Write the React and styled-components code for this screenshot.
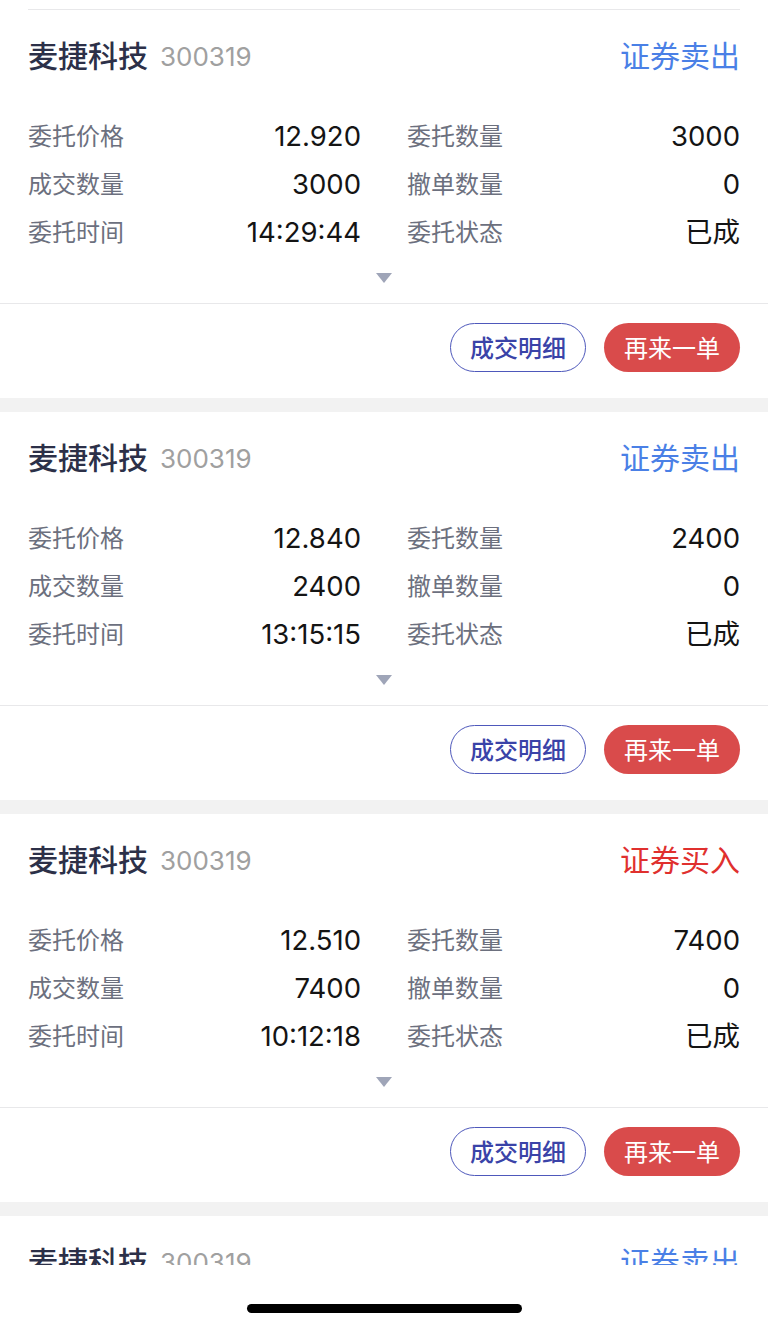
import React from "react";
import styled, { createGlobalStyle } from "styled-components";

const Global = createGlobalStyle`
  html, body { margin: 0; padding: 0; background: #ffffff; }
  body { font-family: "Liberation Sans", "Noto Sans CJK SC", sans-serif; -webkit-font-smoothing: antialiased; }
  * { box-sizing: border-box; }
`;

const Screen = styled.div`
  width: 768px;
  height: 1328px;
  display: flex;
  flex-direction: column;
  background: #ffffff;
  overflow: hidden;
`;

const ScrollArea = styled.div`
  height: 1265px;
  overflow: hidden;
  flex-shrink: 0;
`;

const TopRule = styled.div`
  margin: 9px 28px 0;
  height: 1px;
  background: #e8e8ea;
`;

const Card = styled.section`
  background: #ffffff;
`;

const Gap = styled.div`
  height: 14px;
  background: #f2f2f2;
`;

const Header = styled.div`
  height: 92px;
  padding: 0 28px 4px;
  display: flex;
  align-items: center;
  justify-content: space-between;
`;

const TitleGroup = styled.div`
  display: flex;
  align-items: center;
  gap: 12px;
`;

const Name = styled.span`
  font-family: "Noto Sans CJK SC", sans-serif;
  font-size: 30px;
  line-height: 1;
  font-weight: 500;
  color: #2c3048;
`;

const Code = styled.span`
  font-family: "Inter", sans-serif;
  font-size: 26px;
  line-height: 1;
  padding-top: 6px;
  color: #a0a0a0;
`;

const Side = styled.span`
  font-family: "Noto Sans CJK SC", sans-serif;
  font-size: 30px;
  line-height: 1;
  color: ${(p) => (p.$buy ? "#e0302e" : "#4a80e6")};
`;

const Grid = styled.div`
  padding: 9px 28px 0;
  display: grid;
  grid-template-columns: 333px 333px;
  column-gap: 46px;
`;

const Row = styled.div`
  height: 48px;
  display: flex;
  align-items: center;
  justify-content: space-between;
`;

const Label = styled.span`
  font-family: "Noto Sans CJK SC", sans-serif;
  font-size: 24px;
  line-height: 1;
  color: #6c707e;
`;

const Value = styled.span`
  font-family: "Inter", "Noto Sans CJK SC", sans-serif;
  font-size: 27.5px;
  line-height: 1;
  padding-top: 4px;
  color: #141414;
`;

const Expand = styled.div`
  height: 48px;
  padding-top: 18px;
  display: flex;
  justify-content: center;
`;

const Divider = styled.div`
  height: 1px;
  background: #e8e8ea;
`;

const Footer = styled.div`
  padding: 19px 28px 26px;
  display: flex;
  justify-content: flex-end;
  gap: 18px;
`;

const Button = styled.button`
  width: 136px;
  height: 49px;
  border-radius: 25px;
  font-family: "Noto Sans CJK SC", sans-serif;
  font-size: 24px;
  line-height: 1;
  padding: 0 0 2px;
  display: flex;
  align-items: center;
  justify-content: center;
  border: ${(p) => (p.$primary ? "none" : "1.5px solid #4e58bb")};
  background: ${(p) => (p.$primary ? "#d94b4b" : "#ffffff")};
  color: ${(p) => (p.$primary ? "#ffffff" : "#3a43a8")};
  font-weight: ${(p) => (p.$primary ? 400 : 500)};
`;

const BottomBar = styled.div`
  flex: 1;
  display: flex;
  justify-content: center;
  padding-top: 39px;
`;

const HomeIndicator = styled.div`
  width: 275px;
  height: 9px;
  border-radius: 5px;
  background: #000000;
`;

const Caret = () => (
  <svg width="16" height="10" viewBox="0 0 16 10">
    <path d="M0 0 H16 L8 10 Z" fill="#9fa5b8" />
  </svg>
);

const orders = [
  { side: "证券卖出", buy: false, price: "12.920", qty: "3000", done: "3000", cancel: "0", time: "14:29:44", status: "已成" },
  { side: "证券卖出", buy: false, price: "12.840", qty: "2400", done: "2400", cancel: "0", time: "13:15:15", status: "已成" },
  { side: "证券买入", buy: true, price: "12.510", qty: "7400", done: "7400", cancel: "0", time: "10:12:18", status: "已成" },
  { side: "证券卖出", buy: false, price: "12.500", qty: "2000", done: "2000", cancel: "0", time: "09:45:02", status: "已成" },
];

const OrderCard = ({ o }) => (
  <Card>
    <Header>
      <TitleGroup>
        <Name>麦捷科技</Name>
        <Code>300319</Code>
      </TitleGroup>
      <Side $buy={o.buy}>{o.side}</Side>
    </Header>
    <Grid>
      <Row><Label>委托价格</Label><Value>{o.price}</Value></Row>
      <Row><Label>委托数量</Label><Value>{o.qty}</Value></Row>
      <Row><Label>成交数量</Label><Value>{o.done}</Value></Row>
      <Row><Label>撤单数量</Label><Value>{o.cancel}</Value></Row>
      <Row><Label>委托时间</Label><Value>{o.time}</Value></Row>
      <Row><Label>委托状态</Label><Value>{o.status}</Value></Row>
    </Grid>
    <Expand><Caret /></Expand>
    <Divider />
    <Footer>
      <Button>成交明细</Button>
      <Button $primary>再来一单</Button>
    </Footer>
  </Card>
);

export default function App() {
  return (
    <Screen>
      <Global />
      <ScrollArea>
        <TopRule />
        {orders.map((o, i) => (
          <React.Fragment key={i}>
            {i > 0 && <Gap />}
            <OrderCard o={o} />
          </React.Fragment>
        ))}
      </ScrollArea>
      <BottomBar>
        <HomeIndicator />
      </BottomBar>
    </Screen>
  );
}
